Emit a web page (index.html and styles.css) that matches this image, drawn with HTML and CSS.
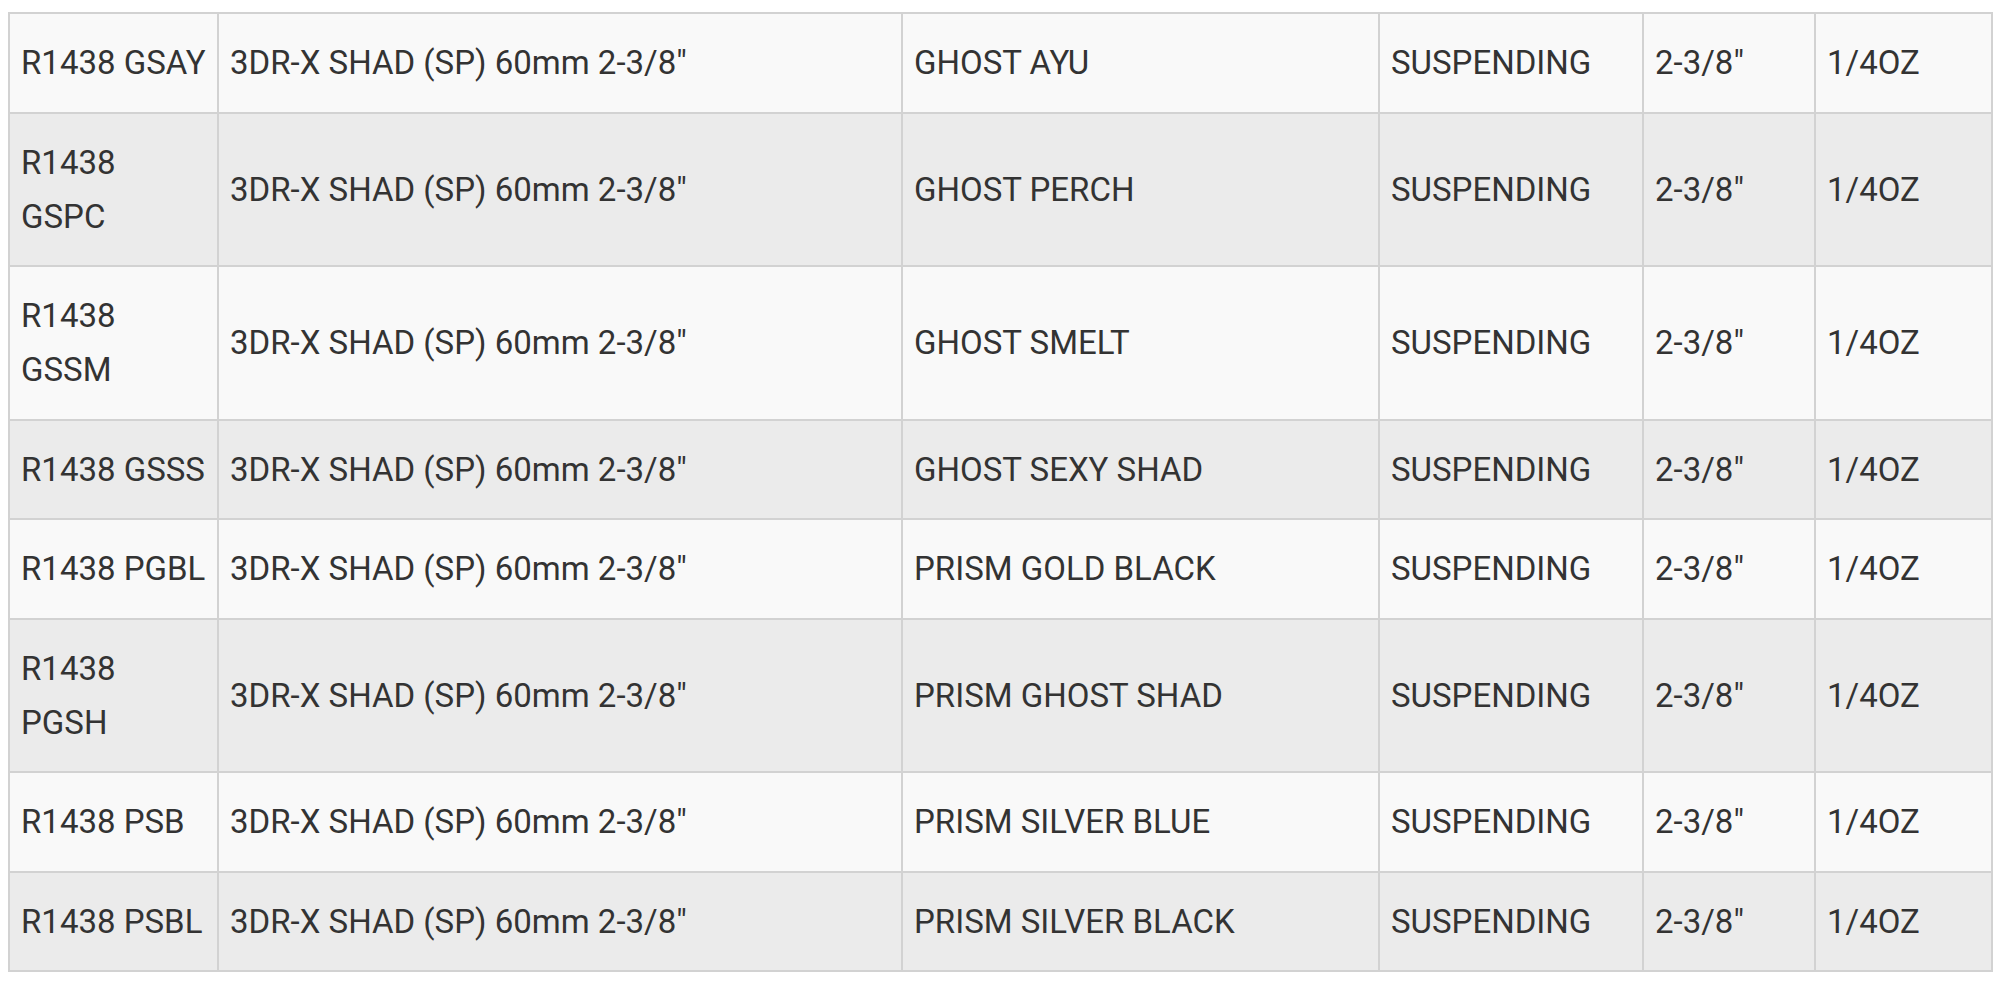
FILE: index.html
```html
<!DOCTYPE html>
<html>
<head>
<meta charset="utf-8">
<link rel="stylesheet" href="styles.css">
</head>
<body>
<table class="spec">
  <colgroup>
    <col class="c1"><col class="c2"><col class="c3"><col class="c4"><col class="c5"><col class="c6">
  </colgroup>
  <tbody>
    <tr><td class="code">R1438 GSAY</td><td>3DR-X SHAD (SP) 60mm 2-3/8"</td><td>GHOST AYU</td><td>SUSPENDING</td><td>2-3/8"</td><td>1/4OZ</td></tr>
    <tr><td class="code">R1438<br>GSPC</td><td>3DR-X SHAD (SP) 60mm 2-3/8"</td><td>GHOST PERCH</td><td>SUSPENDING</td><td>2-3/8"</td><td>1/4OZ</td></tr>
    <tr><td class="code">R1438<br>GSSM</td><td>3DR-X SHAD (SP) 60mm 2-3/8"</td><td>GHOST SMELT</td><td>SUSPENDING</td><td>2-3/8"</td><td>1/4OZ</td></tr>
    <tr><td class="code">R1438 GSSS</td><td>3DR-X SHAD (SP) 60mm 2-3/8"</td><td>GHOST SEXY SHAD</td><td>SUSPENDING</td><td>2-3/8"</td><td>1/4OZ</td></tr>
    <tr><td class="code">R1438 PGBL</td><td>3DR-X SHAD (SP) 60mm 2-3/8"</td><td>PRISM GOLD BLACK</td><td>SUSPENDING</td><td>2-3/8"</td><td>1/4OZ</td></tr>
    <tr><td class="code">R1438<br>PGSH</td><td>3DR-X SHAD (SP) 60mm 2-3/8"</td><td>PRISM GHOST SHAD</td><td>SUSPENDING</td><td>2-3/8"</td><td>1/4OZ</td></tr>
    <tr><td class="code">R1438 PSB</td><td>3DR-X SHAD (SP) 60mm 2-3/8"</td><td>PRISM SILVER BLUE</td><td>SUSPENDING</td><td>2-3/8"</td><td>1/4OZ</td></tr>
    <tr><td class="code">R1438 PSBL</td><td>3DR-X SHAD (SP) 60mm 2-3/8"</td><td>PRISM SILVER BLACK</td><td>SUSPENDING</td><td>2-3/8"</td><td>1/4OZ</td></tr>
  </tbody>
</table>
</body>
</html>
```

FILE: styles.css
```css
html, body {
  margin: 0;
  padding: 0;
  background: #ffffff;
}
body {
  padding: 12px 0 0 8px;
  font-family: Roboto, "Liberation Sans", Arial, sans-serif;
}
.spec {
  border-collapse: collapse;
  table-layout: fixed;
  width: 1985px;
  font-size: 33px;
  line-height: 54px;
  color: #333333;
}
.spec td {
  border: 2px solid #d2d2d2;
  padding: 22px 11px 21.5px;
  vertical-align: middle;
  text-align: left;
  white-space: nowrap;
  overflow: hidden;
}
.spec tr:nth-child(odd) td {
  background: #f9f9f9;
}
.spec tr:nth-child(even) td {
  background: #ebebeb;
}
.c1 { width: 209px; }
.c2 { width: 684px; }
.c3 { width: 477px; }
.c4 { width: 264px; }
.c5 { width: 172px; }
.c6 { width: 177px; }
```
